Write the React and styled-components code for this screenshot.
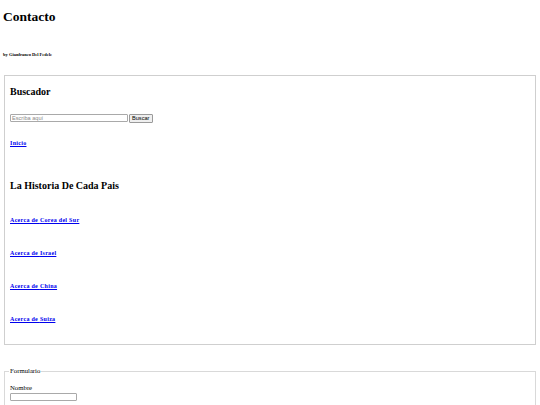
import React from "react";
import styled, { createGlobalStyle } from "styled-components";

const GlobalStyle = createGlobalStyle`
  html, body {
    margin: 0;
    padding: 0;
    background: #fff;
  }
  body {
    font-family: "Liberation Serif", "Times New Roman", serif;
    font-size: 6.75px;
    color: #000;
  }
`;

const Page = styled.div`
  padding: 0 3px 40px;
`;

const Title = styled.h1`
  margin: 9px 0 0;
  font-size: 13.5px;
  line-height: 16px;
  font-weight: bold;
`;

const Byline = styled.h6`
  margin: 26.5px 0 0;
  font-size: 4.5px;
  line-height: 6px;
  font-weight: bold;
`;

const Panel = styled.section`
  margin: 17.5px 1px 0;
  padding: 0 5px 21px;
  border: 1px solid #cfcfcf;
`;

const Heading = styled.h2`
  margin: ${(p) => p.$top}px 0 0;
  font-size: 10px;
  line-height: 12px;
  font-weight: bold;
`;

const SearchRow = styled.form`
  display: flex;
  align-items: center;
  margin-top: 16px;
  height: 9px;
`;

const SearchInput = styled.input`
  box-sizing: border-box;
  width: 118px;
  height: 8px;
  margin: 0;
  padding: 0 1px;
  border: 1px solid #a9a9a9;
  border-radius: 1px;
  font-family: "Liberation Sans", Arial, sans-serif;
  font-size: 5.6px;
  outline: none;
  &::placeholder {
    color: #8a8a8a;
  }
`;

const SearchButton = styled.button`
  box-sizing: border-box;
  height: 9px;
  margin: 0 0 0 0.5px;
  padding: 0 2.5px;
  border: 1px solid #9a9a9a;
  border-radius: 1px;
  background: #efefef;
  font-family: "Liberation Sans", Arial, sans-serif;
  font-size: 5.6px;
  line-height: 7px;
  color: #000;
`;

const LinkLine = styled.h5`
  margin: ${(p) => p.$top}px 0 0;
  font-size: 6px;
  line-height: 7px;
  font-weight: bold;
  letter-spacing: 0.3px;
  a {
    color: #0000ee;
    text-decoration: underline;
  }
`;

const Form = styled.fieldset`
  margin: 22px 1px 0;
  padding: 0 5px 6px;
  border: 1px solid #d9d9d9;
  legend {
    padding: 0 1px;
    margin-left: -1px;
    font-size: 6.75px;
    line-height: 8px;
  }
`;

const Label = styled.label`
  display: block;
  margin-top: 9px;
  font-size: 6.75px;
  line-height: 8px;
`;

const NameInput = styled.input`
  display: block;
  box-sizing: border-box;
  width: 67px;
  height: 8px;
  margin: 1px 0 0;
  padding: 0;
  border: 1px solid #a9a9a9;
  border-radius: 1px;
  outline: none;
`;

const countries = ["Corea del Sur", "Israel", "China", "Suiza"];

const App = () => {
  return (
    <Page>
      <GlobalStyle />
      <Title>Contacto</Title>
      <Byline>by Gianfranco Del Fedele</Byline>
      <Panel>
        <Heading $top={9.6}>Buscador</Heading>
        <SearchRow onSubmit={(e) => e.preventDefault()}>
          <SearchInput type="text" placeholder="Escriba aquí" />
          <SearchButton type="submit">Buscar</SearchButton>
        </SearchRow>
        <LinkLine $top={17.5}>
          <a href="#inicio">Inicio</a>
        </LinkLine>
        <Heading $top={32.6}>La Historia De Cada Pais</Heading>
        {countries.map((c, i) => (
          <LinkLine key={c} $top={i === 0 ? 25.4 : 26}>
            <a href="#pais">Acerca de {c}</a>
          </LinkLine>
        ))}
      </Panel>
      <Form>
        <legend>Formulario</legend>
        <Label htmlFor="nombre">Nombre</Label>
        <NameInput id="nombre" type="text" />
      </Form>
    </Page>
  );
};

export default App;
